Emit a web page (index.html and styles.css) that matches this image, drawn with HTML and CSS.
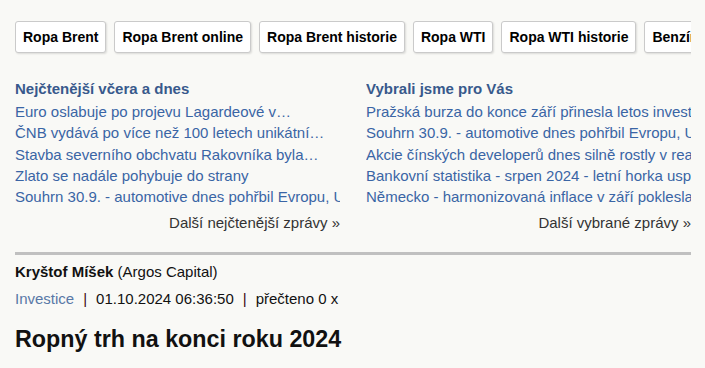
FILE: index.html
```html
<!DOCTYPE html>
<html lang="cs">
<head>
    <meta charset="UTF-8">
    <meta name="viewport" content="width=device-width, initial-scale=1.0">
    <title>Ropný trh na konci roku 2024</title>
    <link rel="stylesheet" href="styles.css">
</head>
<body>
    <div class="page">
        <div class="tagy">
            <a class="tag" href="#">Ropa Brent</a>
            <a class="tag" href="#">Ropa Brent online</a>
            <a class="tag" href="#">Ropa Brent historie</a>
            <a class="tag" href="#">Ropa WTI</a>
            <a class="tag" href="#">Ropa WTI historie</a>
            <a class="tag" href="#">Benzín</a>
            <a class="tag" href="#">Nafta</a>
        </div><!--tagy-->

        <div class="zpravy">
            <div class="sloupec">
                <h3>Nejčtenější včera a dnes</h3>
                <ul>
                    <li><a href="#">Euro oslabuje po projevu Lagardeové v…</a></li>
                    <li><a href="#">ČNB vydává po více než 100 letech unikátní…</a></li>
                    <li><a href="#">Stavba severního obchvatu Rakovníka byla…</a></li>
                    <li><a href="#">Zlato se nadále pohybuje do strany</a></li>
                    <li><a href="#">Souhrn 30.9. - automotive dnes pohřbil Evropu, USA zvládají</a></li>
                </ul>
                <a class="dalsi" href="#">Další nejčtenější zprávy »</a>
            </div>
            <div class="sloupec">
                <h3>Vybrali jsme pro Vás</h3>
                <ul>
                    <li><a href="#">Pražská burza do konce září přinesla letos investorům zisk</a></li>
                    <li><a href="#">Souhrn 30.9. - automotive dnes pohřbil Evropu, USA zvládají</a></li>
                    <li><a href="#">Akcie čínských developerů dnes silně rostly v reakci na stimuly</a></li>
                    <li><a href="#">Bankovní statistika - srpen 2024 - letní horka uspávají trh</a></li>
                    <li><a href="#">Německo - harmonizovaná inflace v září poklesla pod 2 %</a></li>
                </ul>
                <a class="dalsi" href="#">Další vybrané zprávy »</a>
            </div>
        </div><!--zpravy-->

        <div class="clanek">
            <p class="autor"><b>Kryštof Míšek</b> (Argos Capital)</p>
            <p class="info">
                <a href="#">Investice</a><span class="sep">|</span>01.10.2024 06:36:50<span class="sep">|</span>přečteno 0 x
            </p>
            <h1>Ropný trh na konci roku 2024</h1>
        </div><!--clanek-->
    </div><!--page-->
</body>
</html>
```

FILE: styles.css
```css
body{
    margin: 0;
    background: #f9f9f6;
    font-family: "Liberation Sans", Arial, sans-serif;
    color: #111;
}

a{
    text-decoration: none;
}

.page{
    width: 676px;
    padding: 21px 0 0 15px;
}

.tagy{
    display: flex;
    gap: 8px;
    overflow: hidden;
    padding: 0 0 3px 0;
}

.tag{
    flex: none;
    display: block;
    height: 30px;
    line-height: 30px;
    padding: 0 7px;
    background: #fff;
    border: 1px solid #cacaca;
    border-radius: 3px;
    box-shadow: 1px 1px 2px rgba(0, 0, 0, 0.12);
    color: #000;
    font-size: 14px;
    font-weight: bold;
    white-space: nowrap;
}

.zpravy{
    display: flex;
    justify-content: space-between;
    margin-top: 22px;
    padding-bottom: 19px;
    border-bottom: 3px solid #c0c0c0;
}

.sloupec{
    width: 325px;
    overflow: hidden;
    display: flex;
    flex-direction: column;
}

.sloupec h3{
    margin: 0 0 2px 0;
    font-size: 15px;
    line-height: 21px;
    color: #38598c;
}

.sloupec ul{
    list-style: none;
    margin: 0;
    padding: 0;
}

.sloupec li{
    font-size: 15px;
    line-height: 21.3px;
    white-space: nowrap;
    overflow: hidden;
}

.sloupec li a{
    color: #3a65a5;
}

.dalsi{
    align-self: flex-end;
    margin-top: 5px;
    font-size: 15px;
    line-height: 21px;
    color: #333;
}

.clanek p{
    margin: 0;
    font-size: 15px;
}

.autor{
    margin-top: 7px !important;
    line-height: 20px;
}

.info{
    margin-top: 7px !important;
    line-height: 20px;
}

.info a{
    color: #5878a6;
}

.sep{
    color: #3d0a14;
    padding: 0 9px;
}

h1{
    margin: 16px 0 0 0;
    font-size: 23.3px;
    line-height: 28px;
}
```
